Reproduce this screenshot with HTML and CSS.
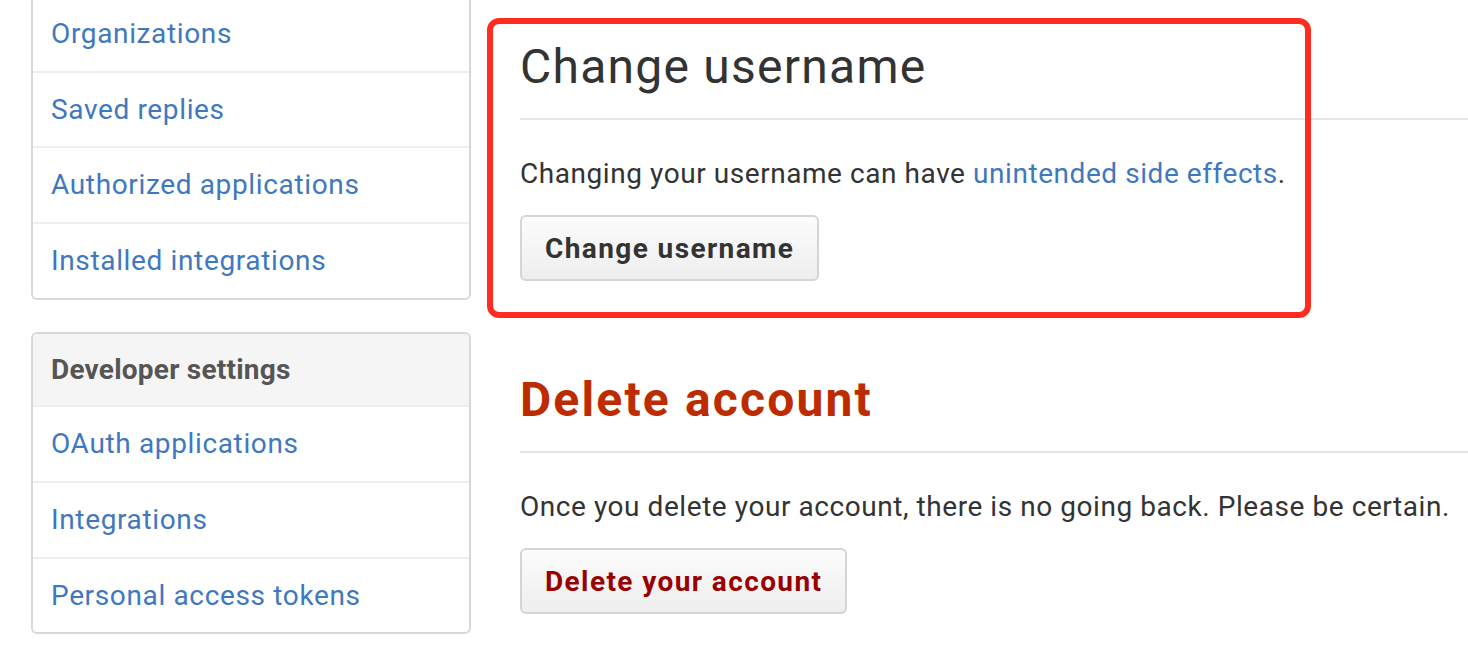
FILE: index.html
```html
<!DOCTYPE html>
<html lang="en">
<head>
<meta charset="utf-8">
<title>Account settings</title>
<link rel="stylesheet" href="styles.css">
</head>
<body>
<div class="page">
  <aside class="sidebar">
    <nav class="menu">
      <a class="menu-item" href="#">Organizations</a>
      <a class="menu-item" href="#">Saved replies</a>
      <a class="menu-item" href="#">Authorized applications</a>
      <a class="menu-item" href="#">Installed integrations</a>
    </nav>
    <nav class="menu">
      <div class="menu-heading">Developer settings</div>
      <a class="menu-item" href="#">OAuth applications</a>
      <a class="menu-item" href="#">Integrations</a>
      <a class="menu-item" href="#">Personal access tokens</a>
    </nav>
  </aside>
  <main class="main">
    <section class="section section-username">
      <h2 class="subhead">Change username</h2>
      <p class="text">Changing your username can have <a class="link" href="#">unintended side effects</a>.</p>
      <button class="btn" type="button">Change username</button>
      <div class="highlight"></div>
    </section>
    <section class="section section-danger">
      <h2 class="subhead subhead-danger">Delete account</h2>
      <p class="text">Once you delete your account, there is no going back. Please be certain.</p>
      <button class="btn btn-danger" type="button">Delete your account</button>
    </section>
  </main>
</div>
</body>
</html>
```
FILE: styles.css
```css
html, body {
  margin: 0;
  padding: 0;
  background: #fff;
}
body {
  font-family: Roboto, "Liberation Sans", Arial, sans-serif;
  color: #333;
  overflow: hidden;
}
.page {
  display: flex;
  gap: 49px;
  padding-left: 31px;
}
.sidebar {
  width: 440px;
  flex: none;
  display: flex;
  flex-direction: column;
  gap: 32px;
  margin-top: -5px;
}
.menu {
  border: 2px solid #d8d8d8;
  border-radius: 6px;
  background: #fff;
  overflow: hidden;
}
.menu-item {
  display: block;
  padding: 16px 18px;
  line-height: 41.67px;
  font-size: 28px;
  letter-spacing: 0.023em;
  color: #4078c0;
  text-decoration: none;
  border-top: 2px solid #eee;
}
.menu-item:first-child {
  border-top: none;
}
.menu-heading {
  padding: 15px 18px;
  line-height: 41.5px;
  font-size: 28px;
  font-weight: 700;
  letter-spacing: 0.008em;
  color: #555;
  background: #f5f5f5;
}
.main {
  flex: 1;
  padding-top: 37px;
}
.section {
  position: relative;
}
.section-danger {
  margin-top: 89px;
}
.subhead {
  margin: 0;
  font-size: 48px;
  font-weight: 400;
  letter-spacing: 0.026em;
  line-height: 60px;
  color: #333;
  padding-bottom: 21px;
  border-bottom: 2px solid #e5e5e5;
}
.subhead-danger {
  font-weight: 700;
  letter-spacing: 0.045em;
  color: #bd2c00;
}
.text {
  margin: 34px 0 21px;
  font-size: 28px;
  letter-spacing: 0.02em;
  line-height: 40px;
  color: #333;
}
.link {
  color: #4078c0;
  text-decoration: none;
}
.btn {
  display: block;
  height: 66px;
  padding: 0 23px;
  font-family: inherit;
  font-size: 28px;
  font-weight: 700;
  letter-spacing: 0.05em;
  color: #333;
  border: 2px solid #d5d5d5;
  border-radius: 6px;
  background: linear-gradient(#fcfcfc, #eee);
}
.btn-danger {
  color: #900;
}
.highlight {
  position: absolute;
  left: -33px;
  top: -19px;
  width: 824px;
  height: 300px;
  box-sizing: border-box;
  border: 6px solid #ff2d20;
  border-radius: 12px;
  pointer-events: none;
}
```
